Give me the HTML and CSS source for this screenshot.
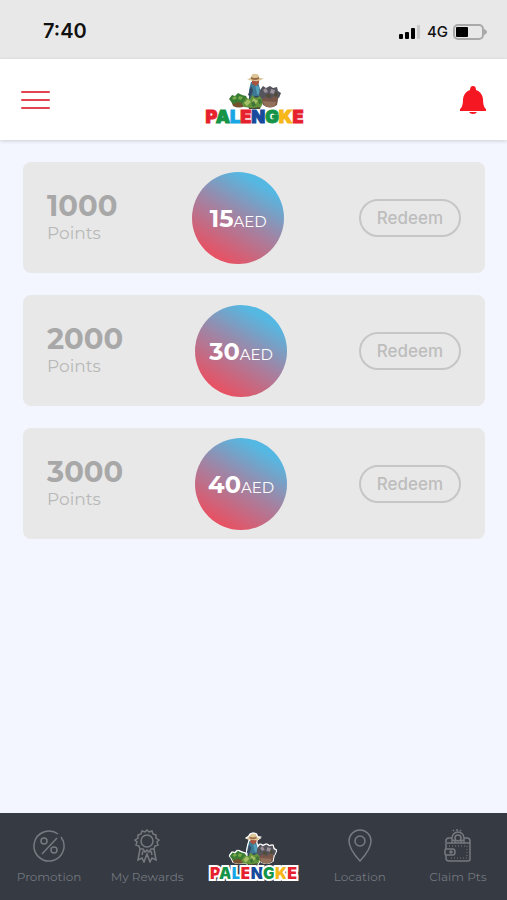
FILE: index.html
```html
<!DOCTYPE html>
<html lang="en">
<head>
    <meta charset="UTF-8">
    <meta name="viewport" content="width=device-width, initial-scale=1.0">
    <title>Palengke</title>
    <link rel="stylesheet" href="styles.css">
</head>
<body>
    <!-- Shared vendor drawing, used in header and bottom nav -->
    <svg class="sprite" aria-hidden="true">
        <symbol id="vendor" viewBox="0 0 56 38">
            <path d="M24 10h7l2 7 1 8-12 1v-8z" fill="#3d7895"/>
            <path d="M24 14l-3 9 3 2 2-7zM22 24h10l1 9H22z" fill="#374861"/>
            <path d="M28 12l4 3 1 8-3-1z" fill="#569fb8"/>
            <path d="M25 7h7v4l-3 3-4-2z" fill="#a8543f"/>
            <path d="M20 7q3 0 4-2 1-4 5-3 3 0 3 3 1 2 5 1-4 4-9 3-5 0-8-2z" fill="#dcc596"/>
            <path d="M24 5q4 2 8 0v2q-4 2-8 0z" fill="#9b6b45"/>
            <path d="M3 26h17l-2 8q-6 3-12 0z" fill="#75502f"/>
            <path d="M2 27l3-4 3 1 3-3 4 2 4 1 2 4-4 4-6-2-5 2z" fill="#397b32"/>
            <path d="M5 26l3-2 2 2-3 2zM12 24l4 1-2 3-3-1z" fill="#77aa49"/>
            <path d="M20 30h15l-2 7H22z" fill="#4a4938"/>
            <path d="M15 32l4-6 4 1 2-4 4 3 4-2 4 5-3 6-9 1-8-1z" fill="#63943c"/>
            <path d="M17 31l4-4 3 3-4 4zM26 26l5 3-3 4-3-2z" fill="#a4bf66"/>
            <path d="M24 31l3-2 2 4-3 2zM31 28l3-1 1 4-3 1z" fill="#3f7337"/>
            <path d="M34 22h18l-2 11q-7 5-14 0z" fill="#785647"/>
            <path d="M36 29l13 1-1 4q-6 3-11-1z" fill="#93705b"/>
            <path d="M33 18l3-4 3 2 4-2 3 2 4-1 1 4 3 2-2 5-5-2-4 3-4-2-4 2-3-4z" fill="#55535c"/>
            <path d="M36 18l3-2 2 4-3 1zM44 17l4 1-1 4-4-1z" fill="#9b929a"/>
            <path d="M40 22l4 1-2 3-3-2zM48 20l3 2-2 3-2-2z" fill="#504d32"/>
        </symbol>
    </svg>

    <div class="status-bar">
        <time class="status-time">7:40</time>
        <div class="status-icons">
            <svg width="24" height="16" viewBox="0 0 24 16" aria-hidden="true">
                <rect x="1" y="10" width="4" height="5" rx="1"/>
                <rect x="7" y="8" width="4" height="7" rx="1"/>
                <rect x="13" y="4" width="4" height="11" rx="1"/>
                <rect x="19" y="1" width="3" height="14" rx="1" fill="#c9c9c9"/>
            </svg>
            <span>4G</span>
            <svg width="34" height="18" viewBox="0 0 34 18" aria-hidden="true">
                <rect x="1" y="2" width="29" height="14" rx="4" fill="none" stroke="#a9a9a9" stroke-width="2"/>
                <rect x="3" y="4" width="12" height="10" rx="1"/>
                <path d="M31 6q3 1 3 3t-3 3z" fill="#a9a9a9"/>
            </svg>
        </div>
    </div>

    <header class="header">
        <button class="icon-button" type="button" aria-label="Menu">
            <svg width="30" height="22" viewBox="0 0 30 22" aria-hidden="true">
                <path d="M2 3h27M2 11h27M2 19h27" stroke="#e14450" stroke-width="2" stroke-linecap="round"/>
            </svg>
        </button>
        <a class="logo" href="#" aria-label="Palengke">
            <svg class="logo-image" aria-hidden="true"><use href="#vendor"/></svg>
            <span class="logo-text"><span class="red">P</span><span class="green">A</span><span class="sky">L</span><span class="red">E</span><span class="blue">N</span><span class="green">G</span><span class="yellow">K</span><span class="red">E</span></span>
        </a>
        <button class="icon-button" type="button" aria-label="Notifications">
            <svg width="28" height="30" viewBox="0 0 28 30" aria-hidden="true">
                <path d="M14 1q3 0 3 4 6 2 7 9 0 8 3 10v2H1v-2q3-2 3-10 1-7 7-9 0-4 3-4z" fill="#f51722"/>
                <path d="M10 27h8q-1 2-4 2t-4-2z" fill="#f51722"/>
            </svg>
        </button>
    </header>

    <main class="rewards">
        <section class="card">
            <div class="points"><strong>1000</strong><span>Points</span></div>
            <div class="amount"><p><strong>15</strong>AED</p></div>
            <button class="redeem" type="button">Redeem</button>
        </section>
        <section class="card">
            <div class="points"><strong>2000</strong><span>Points</span></div>
            <div class="amount"><p><strong>30</strong>AED</p></div>
            <button class="redeem" type="button">Redeem</button>
        </section>
        <section class="card">
            <div class="points"><strong>3000</strong><span>Points</span></div>
            <div class="amount"><p><strong>40</strong>AED</p></div>
            <button class="redeem" type="button">Redeem</button>
        </section>
    </main>

    <nav class="bottom-nav">
        <a class="nav-item" href="#">
            <svg viewBox="0 0 34 34" aria-hidden="true">
                <path d="M26 5A15 15 0 1 0 29 8M25 9L10 25"/>
                <circle cx="12" cy="12" r="3"/>
                <circle cx="22" cy="21" r="3"/>
            </svg>
            <span>Promotion</span>
        </a>
        <a class="nav-item" href="#">
            <svg viewBox="0 0 34 34" aria-hidden="true">
                <path d="M17 1l2 2 3-1 1 3 3 1v3l3 2-2 2 1 3-3 1-1 3-3 0-2 3-2-2-2 2-2-3-3 0-1-3-3-1 1-3-2-2 3-2V6l3-1 1-3 3 1z"/>
                <circle cx="17" cy="12" r="6"/>
                <path d="M10 20L8 31l4-2 2 4 3-8 3 8 2-4 4 2-2-11M13 22l-1 4M21 22l1 4"/>
            </svg>
            <span>My Rewards</span>
        </a>
        <a class="logo logo-small" href="#" aria-label="Palengke">
            <svg class="logo-image" aria-hidden="true"><use href="#vendor"/></svg>
            <span class="logo-text"><span class="red">P</span><span class="green">A</span><span class="sky">L</span><span class="red">E</span><span class="blue">N</span><span class="green">G</span><span class="yellow">K</span><span class="red">E</span></span>
        </a>
        <a class="nav-item" href="#">
            <svg viewBox="0 0 34 34" aria-hidden="true">
                <path d="M17 32Q6 20 6 12a11 11 0 0 1 22 0q0 8-11 20z"/>
                <circle cx="17" cy="12" r="5"/>
            </svg>
            <span>Location</span>
        </a>
        <a class="nav-item" href="#">
            <svg viewBox="0 0 34 34" aria-hidden="true">
                <path d="M5 20v-8q0-3 3-3h3M23 9h3q3 0 3 3v18q0 2-2 2H8q-3 0-3-3v-3M6 14h23"/>
                <path d="M5 20h7q2 0 2 3t-2 3H5q-1 0-1-1v-4q0-1 1-1zM11 14V9a6 6 0 0 1 12 0v5M14 14v-2l-2-1M20 14v-2l2-1"/>
                <circle cx="17" cy="9" r="3"/>
                <circle cx="10" cy="23" r="1"/>
                <path d="M12 1l1 1M16 0v2M20 1l-1 1"/>
                <path d="M8 17h18v12H8" stroke-width="1" stroke-dasharray="1 2"/>
            </svg>
            <span>Claim Pts</span>
        </a>
    </nav>
</body>
</html>
```
FILE: styles.css
```css
* {
    box-sizing: border-box;
}

body {
    display: flex;
    flex-direction: column;
    min-height: 100vh;
    margin: 0;
    background-color: #f3f6ff;
    font-family: Montserrat, Inter, sans-serif;
}

a {
    text-decoration: none;
}

.sprite {
    display: none;
}

.status-bar {
    display: flex;
    align-items: center;
    justify-content: space-between;
    padding: 20px 20px 16px 43px;
    background-color: #e8e8e8;
    color: #111;
    font-family: Inter, sans-serif;
    line-height: 23px;
}

.status-time {
    font-size: 20px;
    font-weight: 600;
}

.status-icons {
    display: flex;
    align-items: center;
    gap: 5px;
    font-size: 15px;
    font-weight: 500;
}

.header {
    display: flex;
    align-items: center;
    justify-content: space-between;
    padding: 13px 20px 13px;
    background-color: #fff;
    box-shadow: 0 1px 4px rgba(0, 0, 0, 0.16);
}

.icon-button {
    padding: 0;
    border: none;
    background: none;
    cursor: pointer;
}

.icon-button svg {
    display: block;
}

.logo {
    display: flex;
    flex-direction: column;
    align-items: center;
}

.logo-image {
    width: 56px;
    height: 38px;
}

.logo-text {
    margin-top: -3px;
    font-family: Inter, sans-serif;
    font-size: 18px;
    font-weight: 900;
    line-height: 20px;
    -webkit-text-stroke: 1px;
}

.logo-small .logo-image {
    width: 50px;
    height: 34px;
    filter: drop-shadow(1px 0 #fff) drop-shadow(-1px 0 #fff) drop-shadow(0 -1px #fff);
}

.logo-small .logo-text {
    font-size: 16px;
    -webkit-text-stroke: 4px #fff;
    paint-order: stroke fill;
}

.red { color: #e6202c; }
.green { color: #159447; }
.sky { color: #17a7e5; }
.blue { color: #174a9c; }
.yellow { color: #f8b719; }

.rewards {
    display: flex;
    flex-direction: column;
    gap: 22px;
    padding: 22px 22px 22px 23px;
}

.card {
    display: flex;
    align-items: center;
    justify-content: space-between;
    padding: 10px 24px 9px;
    border-radius: 8px;
    background-color: #e8e8e8;
}

.points {
    display: flex;
    flex-direction: column;
    color: #b8b8b8;
    font-size: 17px;
    line-height: 24px;
}

.points strong {
    color: #a8a8a8;
    font-size: 29px;
    line-height: 30px;
}

.amount {
    display: flex;
    align-items: center;
    justify-content: center;
    width: 92px;
    height: 92px;
    border-radius: 50%;
    background: linear-gradient(30deg, #ec4e5f 12%, #a283a3 50%, #55b8e2 82%);
    color: #fff;
    font-size: 15px;
    font-weight: 400;
}

.amount p {
    margin: 0;
}

.amount strong {
    font-size: 24px;
    font-weight: 700;
}

.redeem {
    width: 102px;
    height: 38px;
    padding: 0;
    border: 2px solid #c6c6c6;
    border-radius: 19px;
    background: none;
    color: #bdbdbd;
    font-family: Inter, sans-serif;
    font-size: 17px;
    font-weight: 500;
    cursor: pointer;
}

.bottom-nav {
    display: grid;
    grid-template-columns: 6fr 6fr 7fr 6fr 6fr;
    align-items: center;
    margin-top: auto;
    padding: 16px 0 14px;
    background-color: #353a43;
}

.nav-item {
    display: flex;
    flex-direction: column;
    align-items: center;
    gap: 4px;
    color: #73777d;
    font-size: 12px;
    line-height: 19px;
}

.nav-item svg {
    width: 34px;
    height: 34px;
    fill: none;
    stroke: #777b80;
    stroke-width: 1.5;
}
```
